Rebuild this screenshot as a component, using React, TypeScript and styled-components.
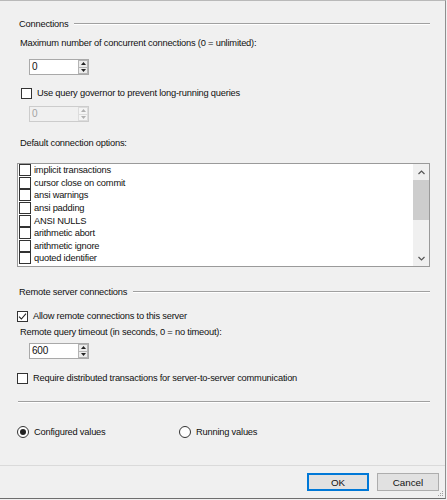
import React from 'react';
import styled, { createGlobalStyle } from 'styled-components';

const GlobalStyle = createGlobalStyle`
  html, body {
    margin: 0;
    padding: 0;
    background: #f0f0f0;
  }
  body {
    font-family: 'Liberation Sans', Arial, sans-serif;
    font-size: 9.3px;
    letter-spacing: -0.2px;
    color: #111;
  }
`;

const Dialog = styled.div`
  box-sizing: border-box;
  width: 446px;
  height: 499px;
  display: flex;
  flex-direction: column;
  background: #f0f0f0;
  border-top: 1px solid #b9b9b9;
  border-right: 1px solid #8f8f8f;
  border-bottom: 1px solid #6e6e6e;
  position: relative;
`;

const Content = styled.div`
  flex: 1;
  display: flex;
  flex-direction: column;
  padding: 0 15px 0 17px;
`;

const GroupHeader = styled.div<{ top: number }>`
  display: flex;
  align-items: center;
  height: 14px;
  margin-top: ${(p) => p.top}px;
  padding-left: 2px;
  gap: 6px;

  &::after {
    content: '';
    flex: 1;
    height: 0;
    border-top: 1px solid #a0a0a0;
    border-bottom: 1px solid #ffffff;
  }
`;

const Label = styled.div<{ top: number; indent?: number }>`
  height: 14px;
  line-height: 14px;
  margin-top: ${(p) => p.top}px;
  padding-left: ${(p) => p.indent ?? 3}px;
  white-space: nowrap;
`;

const Separator = styled.div<{ top: number }>`
  margin-top: ${(p) => p.top}px;
  margin-left: 1px;
  height: 0;
  border-top: 1px solid #a0a0a0;
  border-bottom: 1px solid #ffffff;
`;

/* spin box */

const Spin = styled.div<{ top: number; disabled?: boolean }>`
  box-sizing: border-box;
  display: flex;
  width: 60px;
  height: 16px;
  margin-top: ${(p) => p.top}px;
  margin-left: 12px;
  border: 1px solid ${(p) => (p.disabled ? '#cccccc' : '#a9a9a9')};
  background: ${(p) => (p.disabled ? '#f0f0f0' : '#ffffff')};
  color: ${(p) => (p.disabled ? '#a3a3a3' : '#111')};
`;

const SpinValue = styled.div`
  flex: 1;
  line-height: 14px;
  padding-left: 2px;
  font-size: 10px;
`;

const SpinButtons = styled.div`
  display: flex;
  flex-direction: column;
  width: 10px;
`;

const SpinButton = styled.div<{ disabled?: boolean }>`
  flex: 1;
  display: flex;
  align-items: center;
  justify-content: center;
  box-sizing: border-box;
  border: 1px solid ${(p) => (p.disabled ? '#dcdcdc' : '#b4b4b4')};
  background: ${(p) => (p.disabled ? '#f4f4f4' : '#ececec')};
  & + & {
    border-top: none;
  }
  svg {
    display: block;
  }
`;

function Spinner({ value, top, disabled }: { value: string; top: number; disabled?: boolean }) {
  const fill = disabled ? '#b0b0b0' : '#222';
  return (
    <Spin top={top} disabled={disabled}>
      <SpinValue>{value}</SpinValue>
      <SpinButtons>
        <SpinButton disabled={disabled}>
          <svg width="5" height="3" viewBox="0 0 5 3">
            <path d="M0 3 L2.5 0 L5 3 Z" fill={fill} />
          </svg>
        </SpinButton>
        <SpinButton disabled={disabled}>
          <svg width="5" height="3" viewBox="0 0 5 3">
            <path d="M0 0 L2.5 3 L5 0 Z" fill={fill} />
          </svg>
        </SpinButton>
      </SpinButtons>
    </Spin>
  );
}

/* checkboxes and radios */

const CheckRow = styled.div<{ top: number; indent?: number }>`
  display: flex;
  align-items: center;
  height: 14px;
  margin-top: ${(p) => p.top}px;
  margin-left: ${(p) => p.indent ?? 0}px;
  gap: 5px;
  white-space: nowrap;
`;

const Box = styled.div<{ size?: number }>`
  box-sizing: border-box;
  width: ${(p) => p.size ?? 11}px;
  height: ${(p) => p.size ?? 11}px;
  border: 1px solid #333;
  background: #fff;
  display: flex;
  align-items: center;
  justify-content: center;
  flex-shrink: 0;
`;

function CheckBox({ checked, size }: { checked?: boolean; size?: number }) {
  return (
    <Box size={size}>
      {checked && (
        <svg width="9" height="9" viewBox="0 0 9 9">
          <path d="M1 4.6 L3.4 7 L8 1.6" fill="none" stroke="#222" strokeWidth="1.1" />
        </svg>
      )}
    </Box>
  );
}

const RadioRow = styled.div`
  display: flex;
  margin-top: 22px;
  height: 14px;
`;

const RadioItem = styled.div<{ width?: number }>`
  display: flex;
  align-items: center;
  gap: 5px;
  width: ${(p) => (p.width ? `${p.width}px` : 'auto')};
`;

const RadioCircle = styled.div<{ checked?: boolean }>`
  box-sizing: border-box;
  width: 12px;
  height: 12px;
  border-radius: 50%;
  border: 1px solid #333;
  background: #fff;
  display: flex;
  align-items: center;
  justify-content: center;

  &::after {
    content: '';
    display: ${(p) => (p.checked ? 'block' : 'none')};
    width: 6px;
    height: 6px;
    border-radius: 50%;
    background: #222;
  }
`;

/* list box */

const ListBox = styled.div`
  box-sizing: border-box;
  display: flex;
  height: 104px;
  margin-top: 13px;
  border: 1px solid #9a9a9a;
  background: #fff;
`;

const ListItems = styled.div`
  flex: 1;
  padding-left: 1px;
  overflow: hidden;
`;

const ListRow = styled.div`
  display: flex;
  align-items: center;
  height: 12.6px;
  gap: 3px;
  white-space: nowrap;
`;

const ScrollBar = styled.div`
  width: 16px;
  display: flex;
  flex-direction: column;
  background: #f0f0f0;
`;

const ScrollArrow = styled.div`
  height: 16px;
  display: flex;
  align-items: center;
  justify-content: center;
`;

const ScrollTrack = styled.div`
  flex: 1;
`;

const ScrollThumb = styled.div`
  height: 40px;
  background: #cdcdcd;
`;

/* footer */

const Footer = styled.div`
  box-sizing: border-box;
  height: 33px;
  border-top: 1px solid #dadada;
  display: flex;
  justify-content: flex-end;
  align-items: flex-start;
  gap: 8px;
  padding: 7px 6px 0 0;
`;

const Button = styled.div<{ primary?: boolean }>`
  box-sizing: border-box;
  width: 62px;
  height: 18px;
  display: flex;
  align-items: center;
  justify-content: center;
  background: #e1e1e1;
  border: 1px solid ${(p) => (p.primary ? '#0078d7' : '#adadad')};
  box-shadow: ${(p) => (p.primary ? 'inset 0 0 0 1px #0078d7' : 'none')};
  font-size: 9.8px;
  letter-spacing: 0;
`;

const Grip = styled.svg`
  position: absolute;
  right: 1px;
  bottom: 1px;
`;

const listOptions = [
  'implicit transactions',
  'cursor close on commit',
  'ansi warnings',
  'ansi padding',
  'ANSI NULLS',
  'arithmetic abort',
  'arithmetic ignore',
  'quoted identifier',
];

export default function App() {
  return (
    <>
      <GlobalStyle />
      <Dialog>
        <Content>
          <GroupHeader top={16}>Connections</GroupHeader>
          <Label top={5}>Maximum number of concurrent connections (0 = unlimited):</Label>
          <Spinner value="0" top={9} />
          <CheckRow top={11} indent={4}>
            <CheckBox />
            Use query governor to prevent long-running queries
          </CheckRow>
          <Spinner value="0" top={6} disabled />
          <Label top={14}>Default connection options:</Label>

          <ListBox>
            <ListItems>
              {listOptions.map((opt) => (
                <ListRow key={opt}>
                  <CheckBox size={12} />
                  {opt}
                </ListRow>
              ))}
            </ListItems>
            <ScrollBar>
              <ScrollArrow>
                <svg width="7" height="5" viewBox="0 0 7 5">
                  <path d="M0.5 4 L3.5 1 L6.5 4" fill="none" stroke="#555" strokeWidth="1.2" />
                </svg>
              </ScrollArrow>
              <ScrollTrack>
                <ScrollThumb />
              </ScrollTrack>
              <ScrollArrow>
                <svg width="7" height="5" viewBox="0 0 7 5">
                  <path d="M0.5 1 L3.5 4 L6.5 1" fill="none" stroke="#555" strokeWidth="1.2" />
                </svg>
              </ScrollArrow>
            </ScrollBar>
          </ListBox>

          <GroupHeader top={18}>Remote server connections</GroupHeader>
          <CheckRow top={10}>
            <CheckBox checked />
            Allow remote connections to this server
          </CheckRow>
          <Label top={2}>Remote query timeout (in seconds, 0 = no timeout):</Label>
          <Spinner value="600" top={4} />
          <CheckRow top={12}>
            <CheckBox />
            Require distributed transactions for server-to-server communication
          </CheckRow>

          <Separator top={16} />

          <RadioRow>
            <RadioItem width={162}>
              <RadioCircle checked />
              Configured values
            </RadioItem>
            <RadioItem>
              <RadioCircle />
              Running values
            </RadioItem>
          </RadioRow>
        </Content>

        <Footer>
          <Button primary>OK</Button>
          <Button>Cancel</Button>
        </Footer>

        <Grip width="6" height="6" viewBox="0 0 6 6">
          <rect x="4" y="0" width="1" height="1" fill="#a0a0a0" />
          <rect x="2" y="2" width="1" height="1" fill="#a0a0a0" />
          <rect x="4" y="2" width="1" height="1" fill="#a0a0a0" />
          <rect x="0" y="4" width="1" height="1" fill="#a0a0a0" />
          <rect x="2" y="4" width="1" height="1" fill="#a0a0a0" />
          <rect x="4" y="4" width="1" height="1" fill="#a0a0a0" />
        </Grip>
      </Dialog>
    </>
  );
}
